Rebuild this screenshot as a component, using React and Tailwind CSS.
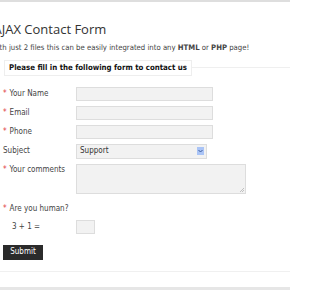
import React from "react";

function Label({ req, children }) {
  return (
    <div className="w-[73px] shrink-0 text-[8px] text-[#444] leading-none">
      {req && <span className="text-[#e03c3c] mr-[3px]">*</span>}
      {children}
    </div>
  );
}

export default function App() {
  return (
    <div className="w-[290px] h-[290px] bg-white overflow-hidden flex flex-col font-stretch-condensed" style={{ fontFamily: '"DejaVu Sans", Verdana, sans-serif' }}>
      <div className="h-[2px] bg-[#dedede] shrink-0" />
      <h1 className="mt-[21px] ml-[-6.5px] text-[13px] leading-none text-[#333] whitespace-nowrap font-stretch-normal" style={{ fontFamily: '"Open Sans", sans-serif' }}>
        AJAX Contact Form
      </h1>
      <p className="mt-[8px] ml-[-9px] text-[7.7px] leading-none text-[#444] whitespace-nowrap">
        With just 2 files this can be easily integrated into any <b>HTML</b> or <b>PHP</b> page!
      </p>
      <div className="mt-[8px] flex items-center">
        <div className="ml-[4px] border border-[#eeeeee] px-[4px] h-[16px] flex items-center text-[7.8px] font-bold text-[#111] whitespace-nowrap">
          Please fill in the following form to contact us
        </div>
        <div className="flex-1 h-px bg-[#efefef]" />
      </div>
      <div className="mt-[11px] ml-[3px] flex flex-col">
        <div className="flex items-center h-[14px]">
          <Label req>Your Name</Label>
          <div className="w-[137px] h-[14px] bg-[#f2f2f2] border border-[#dddddd]" />
        </div>
        <div className="flex items-center h-[14px] mt-[5px]">
          <Label req>Email</Label>
          <div className="w-[137px] h-[14px] bg-[#f2f2f2] border border-[#dddddd]" />
        </div>
        <div className="flex items-center h-[14px] mt-[5px]">
          <Label req>Phone</Label>
          <div className="w-[137px] h-[14px] bg-[#f2f2f2] border border-[#dddddd]" />
        </div>
        <div className="flex items-center h-[15px] mt-[5px]">
          <Label>Subject</Label>
          <div className="w-[131px] h-[15px] bg-[#f2f2f2] border border-[#dddddd] flex items-center justify-between pl-[3px] pr-[2px]">
            <span className="text-[8px] text-[#333] leading-none">Support</span>
            <div className="w-[7px] h-[8px] bg-[#aac4f6] flex items-center justify-center">
              <svg width="5" height="4" viewBox="0 0 5 4"><path d="M0.5 1 L2.5 3 L4.5 1" stroke="#3a5a9a" strokeWidth="1" fill="none" /></svg>
            </div>
          </div>
        </div>
        <div className="flex items-start mt-[5px]">
          <div className="pt-[2px]"><Label req>Your comments</Label></div>
          <div className="relative w-[170px] h-[30px] bg-[#f2f2f2] border border-[#dddddd]">
            <svg className="absolute right-[1px] bottom-[1px]" width="4" height="4" viewBox="0 0 4 4"><path d="M0 4 L4 0 M2 4 L4 2" stroke="#aaa" strokeWidth="0.7" /></svg>
          </div>
        </div>
        <div className="mt-[10px] h-[10px] flex items-center">
          <Label req>Are you human?</Label>
        </div>
        <div className="mt-[6px] flex items-center h-[14px]">
          <div className="w-[73px] pl-[9px] text-[8px] text-[#444] leading-none">3 + 1 =</div>
          <div className="w-[19px] h-[14px] bg-[#f2f2f2] border border-[#dddddd]" />
        </div>
        <div className="mt-[11px]">
          <button className="w-[40px] h-[15px] bg-[#2b2b2b] text-white text-[8px] leading-none flex items-center justify-center">Submit</button>
        </div>
      </div>
      <div className="mt-[11px] h-px bg-[#f0f0f0]" />
      <div className="mt-[15px] h-[3px] bg-[#e6e6e6]" />
    </div>
  );
}
